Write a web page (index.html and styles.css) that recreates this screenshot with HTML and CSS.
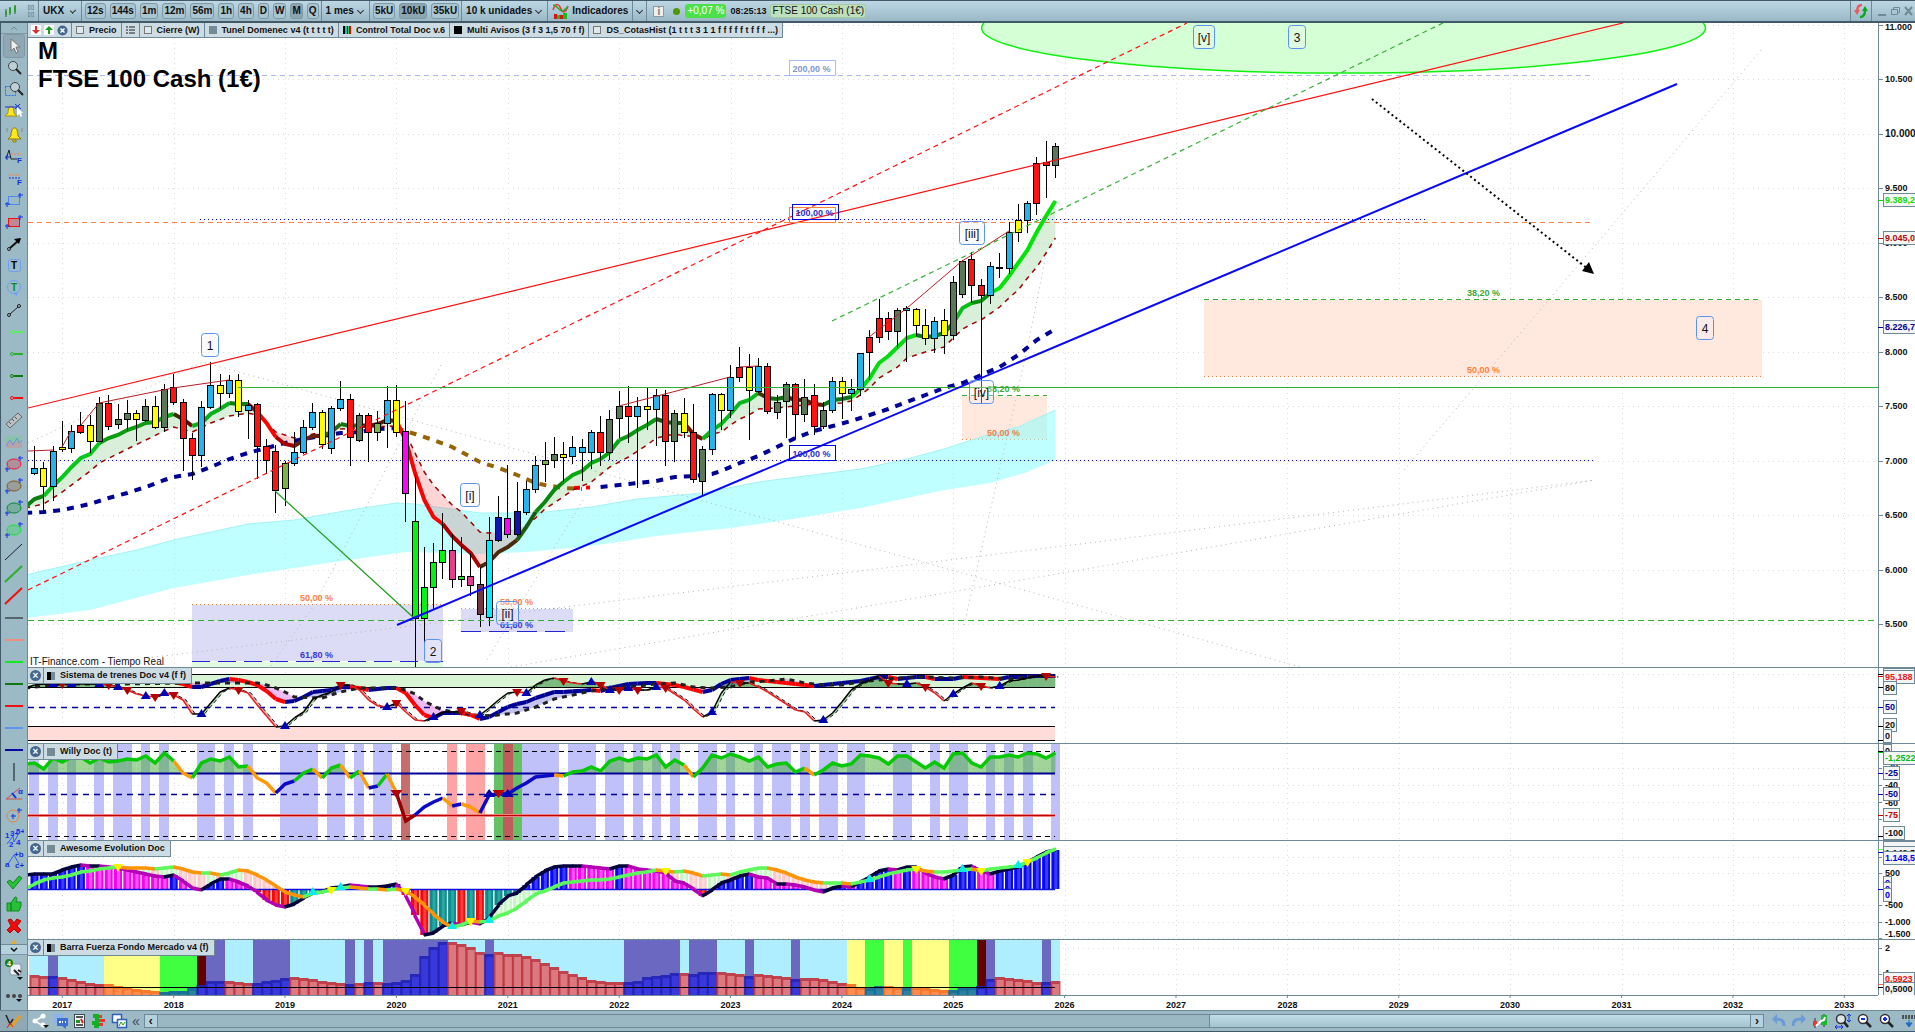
FILE: index.html
```html
<!DOCTYPE html>
<html lang="es">
<head>
<meta charset="utf-8">
<title>UKX - FTSE 100 Cash (1€)</title>
<link rel="stylesheet" href="styles.css">
</head>
<body>
<header class="topbar">
  <span class="cell logo"><svg width="14" height="16" viewBox="0 0 14 16"><path d="M2 6v8M6 4v8M11 2v9" stroke="#1c6b1c"/><path d="M1 8h2v4H1zM5 5h2v5H5zM10 3h2v6h-2z" fill="#2f9e2f"/></svg></span>
  <span class="cell links"><svg width="8" height="16" viewBox="0 0 8 16" fill="none" stroke="#7b939e"><rect x="1.500" y="1.500" width="2" height="5"/><rect x="5.500" y="1.500" width="2" height="5"/><rect x="1.500" y="9.500" width="2" height="5"/><rect x="5.500" y="9.500" width="2" height="5"/></svg></span>
  <button class="cell drop wide">UKX <i class="chev"></i></button>
  <div class="cell group">
    <button class="tf">12s</button><button class="tf">144s</button><button class="tf">1m</button><button class="tf">12m</button><button class="tf">56m</button><button class="tf">1h</button><button class="tf">4h</button><button class="tf">D</button><button class="tf">W</button><button class="tf on">M</button><button class="tf">Q</button>
  </div>
  <button class="cell drop">1 mes <i class="chev"></i></button>
  <div class="cell group">
    <button class="tf">5kU</button><button class="tf on">10kU</button><button class="tf">35kU</button>
  </div>
  <button class="cell drop">10 k unidades <i class="chev"></i></button>
  <button class="cell drop"><svg width="17" height="16" viewBox="0 0 17 16" fill="none"><path d="M1 7C4-1 7 1 9 6s5 3 7-3" stroke="#e33" stroke-width="1.500"/><path d="M1 2c4 0 6 6 9 6s4-4 6-4" stroke="#2fa82f" stroke-width="1.500"/><path d="M2 11h3v5H2zM8 12h3v4H8z" fill="#e01010"/><path d="M5 12h3v4H5zM11 10h4v6h-4z" fill="#10c020"/></svg>Indicadores</button>
  <button class="cell drop only" aria-label="Más indicadores"><i class="chev"></i></button>
  <div class="status">
    <span class="info">i</span><span class="dot"></span><span class="pct">+0,07 %</span><b class="clock">08:25:13</b><span class="name">FTSE 100 Cash (1€)</span>
  </div>
  <button class="sync" aria-label="Sincronizar"><svg width="16" height="16" viewBox="0 0 16 16" fill="none" stroke-width="2.500"><path d="M9 2C5 2 4 5 4 9" stroke="#ee5a5a"/><path d="M1 7l3 5 3-5z" fill="#ee5a5a"/><path d="M7 14c4 0 5-3 5-7" stroke="#10a820"/><path d="M9 8l3-5 3 5z" fill="#10a820"/></svg></button>
  <div class="win">
    <button aria-label="Minimizar"><svg width="9" height="12"><path d="M0 10h8" stroke="#6f8996" stroke-width="2"/></svg></button>
    <button aria-label="Restaurar"><svg width="9" height="12" fill="none" stroke="#6f8996"><path d="M2.500 4V2.500h6v5H6.500M.500 4.500h6v5h-6z"/></svg></button>
    <button aria-label="Cerrar"><svg width="9" height="12"><path d="M1 2l7 8M8 2l-7 8" stroke="#6f8996" stroke-width="2"/></svg></button>
  </div>
</header>

<div class="workspace">
  <aside class="tools">
    <button class="scroll up" aria-label="Subir"><svg width="8" height="5"><path d="M1 4l3-3 3 3" fill="none" stroke="#6f8996" stroke-width="1"/></svg></button>
    <div class="toollist" id="tools"></div>
    <button class="scroll down" aria-label="Bajar"><svg width="8" height="5"><path d="M1 1l3 3 3-3" fill="none" stroke="#111" stroke-width="1.500"/></svg></button>
    <div class="toolend">
      <button class="tool" aria-label="Ajustes"><svg width="20" height="22" viewBox="0 0 20 22"><rect x="6" y="6" width="11" height="11" rx="2" fill="#eef2f4" stroke="#8895a0"/><circle cx="5" cy="5" r="4" fill="#1a7f1a"/><text x="5" y="8" class="badge">4</text><path d="M10 12l5 5m-1-5l3 2" stroke="#222" stroke-width="2"/><path d="M13 19h6l-3 3z" fill="#111"/></svg></button>
      <button class="tool" aria-label="Más"><svg width="20" height="22" viewBox="0 0 20 22"><circle cx="4" cy="11" r="2" fill="#444"/><circle cx="10" cy="11" r="2" fill="#444"/><circle cx="16" cy="11" r="2" fill="#444"/><path d="M12 14h6l-3 3z" fill="#111"/></svg></button>
    </div>
  </aside>

  <main class="charts">
    <section class="panel price">
      <svg id="price"></svg>
      <div class="chips">
        <span class="chip icons">
          <svg width="10" height="10"><rect width="10" height="10" rx="1" fill="#fff"/><path d="M4 1h2v4h3L5 9 1 5h3z" fill="#d83030"/></svg>
          <svg width="10" height="10"><rect width="10" height="10" rx="1" fill="#fff"/><path d="M4 9h2V5h3L5 1 1 5h3z" fill="#1a9c1a"/></svg>
          <svg width="11" height="11" viewBox="0 0 11 11"><circle cx="5.500" cy="5.500" r="5" fill="#44688c"/><path d="M3.500 3.500l4 4m0-4l-4 4" stroke="#fff" stroke-width="1.500"/></svg>
        </span>
        <span class="chip"><i class="sq hollow"></i>Precio</span>
        <span class="chip list"><svg width="9" height="8"><path d="M0 1h2M0 4h2M0 7h2M3 1h6M3 4h6M3 7h6" stroke="#222"/></svg></span>
        <span class="chip"><i class="sq hollow"></i>Cierre (W)</span>
        <span class="chip"><i class="sq grey"></i>Tunel Domenec v4 (t t t t t)</span>
        <span class="chip"><i class="sq multi"></i>Control Total Doc v.6</span>
        <span class="chip"><i class="sq black"></i>Multi Avisos (3 f 3 1,5 70 f f)</span>
        <span class="chip"><i class="sq hollow"></i>DS_CotasHist (1 t t t 3 1 1 f f f f f t f f f ...)</span>
      </div>
      <h1 class="title">M<br>FTSE 100 Cash (1€)</h1>
      <p class="source">IT-Finance.com - Tiempo Real</p>
    </section>
    <section class="panel trains"><svg id="trains"></svg><h2 class="caption"><i class="x"></i><span><i class="sq half"></i>Sistema de trenes Doc v4 (f f)</span></h2></section>
    <section class="panel willy"><svg id="willy"></svg><h2 class="caption"><i class="x"></i><span><i class="sq grey"></i>Willy Doc (t)</span></h2></section>
    <section class="panel awesome"><svg id="awesome"></svg><h2 class="caption"><i class="x"></i><span><i class="sq grey"></i>Awesome Evolution Doc</span></h2></section>
    <section class="panel force"><svg id="force"></svg><h2 class="caption"><i class="x"></i><span><i class="sq half"></i>Barra Fuerza Fondo Mercado v4 (f)</span></h2></section>
    <section class="panel time"><svg id="time"></svg></section>
  </main>
</div>

<footer class="bottombar">
  <button class="bi first" aria-label="Dibujar"><svg width="18" height="18" viewBox="0 0 18 18" fill="none"><path d="M1 3l4 9 3-5" stroke="#222" stroke-width="1.500"/><path d="M6 15L15 4" stroke="#e8a020" stroke-width="3"/><path d="M2 16l3-5 3 4" stroke="#d22"/></svg></button>
  <button class="bi" aria-label="Compartir"><svg width="17" height="16" viewBox="0 0 17 16"><path d="M11 3L3 8l8 5" fill="none" stroke="#fff" stroke-width="1.500"/><circle cx="3" cy="8" r="2.500" fill="#fff"/><circle cx="11" cy="3" r="2.500" fill="#fff"/><circle cx="11" cy="12" r="2.500" fill="#fff"/><path d="M11 12h6l-3 3z" fill="#111"/></svg></button>
  <button class="bi" aria-label="Chat"><svg width="16" height="16" viewBox="0 0 16 16"><path d="M1 1h10v8H4l-3 3z" fill="#8fb2ea"/><path d="M4 5h11v8h-2v3l-4-3H4z" fill="#3a6fd0"/><path d="M6 9h2M9 9h1M12 9h1" stroke="#fff" stroke-width="2"/></svg></button>
  <button class="bi" aria-label="Informe"><svg width="14" height="16" viewBox="0 0 14 16"><rect x="1.500" y="1.500" width="10" height="13" fill="#f4f6f7" stroke="#3b4a52"/><path d="M3 4h7M3 12h7" stroke="#222" stroke-width="1.500"/><path d="M3 7h4v3H3z" fill="#1a9c1a"/><path d="M8 6l2 4" stroke="#d22" stroke-width="2"/></svg></button>
  <button class="bi" aria-label="Profundidad"><svg width="16" height="16" viewBox="0 0 16 16"><path d="M2 1h6v4H2zM4 5h4v3H4zM1 8h7v4H1zM3 12h5v3H3z" fill="#12b024"/><path d="M8 2h3v3H8zM8 6h6v3H8zM8 10h4v3H8z" fill="#e33"/></svg></button>
  <button class="bi" aria-label="Ventanas"><svg width="17" height="16" viewBox="0 0 17 16"><rect x="1.500" y="1.500" width="9" height="8" fill="#fff" stroke="#2c62b8" stroke-width="1.500"/><rect x="6.500" y="6.500" width="9" height="8" fill="#fff" stroke="#2c62b8" stroke-width="1.500"/><path d="M8 13l2-4 2 3 2-3" stroke="#1a9c1a" fill="none"/></svg></button>
  <button class="bi small" aria-label="Plegar">«</button>
  <div class="scrollbar">
    <button class="arrow" aria-label="Izquierda">‹</button>
    <div class="track"><div class="thumb"></div></div>
    <button class="arrow" aria-label="Derecha">›</button>
  </div>
  <div class="bottomright">
    <button class="bi" aria-label="Deshacer"><svg width="14" height="14" fill="none"><path d="M12 12c0-6-3-7-9-7" stroke="#6c9ad6" stroke-width="3"/><path d="M0 5l5-5v10z" fill="#6c9ad6"/></svg></button>
    <button class="bi" aria-label="Rehacer"><svg width="14" height="14" fill="none"><path d="M1 12c0-6 3-7 9-7" stroke="#6c9ad6" stroke-width="3"/><path d="M14 5L9 0v10z" fill="#6c9ad6"/></svg></button>
    <button class="bi" aria-label="Configurar velas"><svg width="16" height="16" viewBox="0 0 16 16"><path d="M3 5v10M12 1v13" stroke="#333"/><path d="M1 8h4v5H1z" fill="#e33"/><path d="M9 2h6v10H9z" fill="#1db92c"/><path d="M4 13l5-5 3-1 1-3" stroke="#fff" stroke-width="2" fill="none"/></svg></button>
    <button class="bi" aria-label="Ajustar zoom"><svg width="17" height="16" viewBox="0 0 17 16"><circle cx="7" cy="6" r="4.500" fill="#dde6ea" stroke="#333" stroke-width="1.500"/><path d="M10 9l4 5" stroke="#222" stroke-width="2.500"/><path d="M1 14h8M15 1v8M3 12l-2 2 2 2M7 12l2 2-2 2M13 3l2-2 2 2M13 7l2 2 2-2" stroke="#1030e0" fill="none"/></svg></button>
    <button class="bi" aria-label="Alejar"><svg width="16" height="16" viewBox="0 0 16 16"><circle cx="6" cy="6" r="4.500" fill="#fff" stroke="#333" stroke-width="1.500"/><path d="M9 9l5 5" stroke="#222" stroke-width="2.500"/><path d="M4 6h4" stroke="#1030e0" stroke-width="2"/></svg></button>
    <button class="bi" aria-label="Acercar"><svg width="16" height="16" viewBox="0 0 16 16"><circle cx="6" cy="6" r="4.500" fill="#fff" stroke="#333" stroke-width="1.500"/><path d="M9 9l5 5" stroke="#222" stroke-width="2.500"/><path d="M4 6h4M6 4v4" stroke="#1030e0" stroke-width="2"/></svg></button>
    <button class="bi" aria-label="Teclado"><svg width="14" height="16" viewBox="0 0 14 16"><path d="M1 3h13M1 5h13" stroke="#333" stroke-dasharray="2 1" stroke-width="1.500"/><path d="M8 7v5M5 10h6l-3 4z" stroke="#2468c8" fill="#2468c8"/></svg></button>
  </div>
</footer>
<script src="chart.js"></script>
</body>
</html>
```
FILE: styles.css
```css
* { box-sizing: border-box; }

body {
  margin: 0;
  height: 100vh;
  display: flex;
  flex-direction: column;
  overflow: hidden;
  background: #fff;
  color: #111;
  font: 10px/14px "Liberation Sans", Arial, sans-serif;
}

button {
  margin: 0;
  padding: 0;
  border: 0;
  background: none;
  color: inherit;
  font: inherit;
}

svg { display: block; }

/* top bar */
.topbar {
  flex: none;
  height: 23px;
  display: flex;
  align-items: stretch;
  background: linear-gradient(#bdd7e5, #9ab8c6);
  border-top: 1px solid #42596a;
  border-bottom: 2px solid #42596a;
  font-weight: bold;
}
.cell {
  display: flex;
  align-items: center;
  padding: 0 4px;
  border-right: 1px solid #6f8996;
  white-space: nowrap;
}
.logo { width: 23px; border: 0; }
.links { width: 16px; }
.wide { width: 43px; }
.group { gap: 4px; padding: 0 2px 0 3px; }
.drop { gap: 3px; }
.only { padding: 0 2px; }
.chev {
  width: 5px;
  height: 5px;
  margin: 0 2px 2px 1px;
  border: solid #333;
  border-width: 0 1px 1px 0;
  transform: rotate(45deg);
}
.wide .chev { margin-left: 4px; }
.only .chev { margin-left: 2px; }
.tf {
  height: 16px;
  padding: 0 1px;
  border: 1px solid #7f98a4;
  border-radius: 3px;
  background: #aac5d2;
}
.tf.on { background: #8ba5b1; }
.status {
  flex: 1;
  display: flex;
  align-items: center;
  gap: 4px;
  padding-left: 6px;
}
.info {
  width: 11px;
  height: 11px;
  border: 1px solid #8d9aa1;
  background: #eee;
  color: #777;
  line-height: 10px;
  text-align: center;
}
.dot {
  width: 7px;
  height: 7px;
  margin: 0 1px 0 5px;
  border-radius: 50%;
  background: #4c9a00;
}
.pct {
  padding: 0 2px;
  border-radius: 3px;
  background: #4de04d;
  color: #fff;
  font-weight: normal;
}
.clock { font-size: 9px; }
.name {
  padding: 0 1px;
  border: 1px solid #a5cba2;
  border-radius: 3px;
  background: #bfdfbd;
  font-weight: normal;
  line-height: 12px;
}
.sync {
  padding: 0 2px;
  border: solid #6f8996;
  border-width: 0 1px;
}
.win { display: flex; align-items: center; gap: 4px; padding: 0 2px 0 6px; }

/* work area */
.workspace {
  flex: 1;
  min-height: 0;
  display: grid;
  grid-template-columns: 28px 1fr;
}
.tools {
  min-height: 0;
  display: flex;
  flex-direction: column;
  background: #9cb9c6;
  border-left: 1px solid #42596a;
  border-right: 1px solid #6f8996;
}
.scroll { flex: none; height: 11px; display: grid; place-items: center; border-bottom: 1px solid #7f98a4; }
.scroll.down { border-top: 1px solid #6f8996; background: #b5d1de; }
.toollist { flex: 1; min-height: 0; overflow: hidden; padding-top: 1px; }
.tool { display: grid; place-items: center; width: 26px; height: 22px; }
.tool.on > svg { background: #8fa8b4; outline: 1px solid #7f98a4; border-radius: 2px; }
.toolend { flex: none; height: 55px; display: flex; flex-direction: column; justify-content: space-around; }
.badge { font: bold 7px "Liberation Sans", sans-serif; fill: #fff; text-anchor: middle; }
.tl { font: bold 10px "Liberation Sans", sans-serif; text-anchor: middle; }
.ts { font: bold 8px "Liberation Sans", sans-serif; fill: #1030e0; }

.charts { min-width: 0; min-height: 0; display: flex; flex-direction: column; }
.panel { position: relative; flex: none; min-height: 0; }
.panel > svg { width: 100%; height: 100%; }
.price { flex: 1; }
.trains { height: 76px; }
.willy { height: 97px; }
.awesome { height: 99px; }
.force { height: 56px; }
.time { height: 15px; }

.chips {
  position: absolute;
  top: 0;
  left: 0;
  display: flex;
  height: 15px;
  font-size: 9px;
  font-weight: bold;
  white-space: nowrap;
}
.chip {
  display: flex;
  align-items: center;
  gap: 5px;
  padding: 0 4px;
  background: #cddce3;
  border: solid #6f8996;
  border-width: 0 1px 1px 0;
}
.icons { width: 44px; gap: 3px; padding: 0 3px; }
.sq { flex: none; width: 8px; height: 8px; }
.hollow { border: 1px solid #777; background: #dfe8ec; }
.grey { background: #748a95; }
.black { background: #000; }
.multi { background: linear-gradient(90deg, #000 2px, #0cc 2px 4px, #000 4px 5px, #4c4 5px 6px, #d00 6px); }
.half { background: linear-gradient(90deg, #000 50%, #748a95 50%); }

.title {
  position: absolute;
  top: 14px;
  left: 10px;
  margin: 0;
  color: #000;
  font-size: 24px;
  line-height: 28px;
}
.source { position: absolute; left: 2px; bottom: 0; margin: 0; line-height: 10px; color: #111; }

.caption {
  position: absolute;
  top: 1px;
  left: 0;
  display: flex;
  height: 16px;
  margin: 0;
  background: #cddce3;
  border: solid #6f8996;
  border-width: 0 1px 1px 0;
  font-size: 9px;
  line-height: 15px;
  white-space: nowrap;
}
.caption > span { display: flex; align-items: center; gap: 5px; padding: 0 5px 0 3px; border-left: 1px solid #6f8996; }
.x {
  width: 11px;
  height: 11px;
  margin: 2px;
  border-radius: 50%;
  background: #44688c;
  color: #fff;
  font: bold 10px/11px "Liberation Sans", sans-serif;
  text-align: center;
}
.x::before { content: "×"; }

svg text { font-family: "Liberation Sans", Arial, sans-serif; }
.num { font-size: 9px; font-weight: bold; }
.big { font-size: 10px; font-weight: bold; }
.wave { font-size: 12px; text-anchor: middle; }
.mid { text-anchor: middle; }
.crisp { shape-rendering: crispEdges; }

/* bottom bar */
.bottombar {
  flex: none;
  height: 22px;
  display: flex;
  align-items: center;
  gap: 4px;
  background: #9cb9c6;
  border-top: 1px solid #6f8996;
  border-bottom: 1px solid #42596a;
}
.bi { flex: none; display: grid; place-items: center; height: 20px; }
.first { width: 28px; background: #8fa8b4; border-right: 1px solid #6f8996; }
.small { font-size: 14px; color: #3a4c55; }
.scrollbar { flex: 1; height: 14px; display: flex; border: 1px solid #6f8996; }
.arrow { width: 12px; background: #b5d1de; font: bold 12px/10px "Liberation Sans", sans-serif; }
.track { flex: 1; display: flex; justify-content: flex-end; background: #9ab7c4; border: solid #6f8996; border-width: 0 1px; }
.thumb { width: 34%; background: linear-gradient(#c0dde9, #a3c3d0); border-left: 1px solid #6f8996; }
.bottomright { display: flex; gap: 6px; padding-left: 4px; }
```
FILE: chart.js
```js
const LEFT = 28, WIDTH = 1887, AXIS = 1878, LAST = 1055;
const month = i => 62.3 + 9.281 * i;
const years = Array.from({ length: 17 }, (_, k) => [2017 + k, month(12 * k)]);

// Small drawing helper: keeps one coordinate space and fits it to the panel.
class Plot {
  constructor(id, top, height) {
    this.el = document.getElementById(id);
    const box = this.el.getBoundingClientRect();
    this.kx = box.width / WIDTH;
    this.ky = box.height / height;
    this.top = top;
    this.height = height;
    this.out = [];
  }
  X(x) { return +((x - LEFT) * this.kx).toFixed(1); }
  Y(y) { return +((y - this.top) * this.ky).toFixed(1); }
  add(s) { this.out.push(s); }
  line(x1, y1, x2, y2, c, w = 1, dash = '', extra = '') {
    this.add(`<line x1="${this.X(x1)}" y1="${this.Y(y1)}" x2="${this.X(x2)}" y2="${this.Y(y2)}" stroke="${c}" stroke-width="${w}" stroke-dasharray="${dash}" ${extra}/>`);
  }
  h(y, x1, x2, c, w = 1, dash = '') { this.line(x1, y + 0.5, x2, y + 0.5, c, w, dash); }
  rect(x1, y1, x2, y2, fill, extra = '') {
    this.add(`<rect x="${this.X(x1)}" y="${this.Y(y1)}" width="${(this.X(x2) - this.X(x1)).toFixed(1)}" height="${(this.Y(y2) - this.Y(y1)).toFixed(1)}" fill="${fill}" ${extra}/>`);
  }
  pts(list) { return list.map(([x, y]) => this.X(x) + ',' + this.Y(y)).join(' '); }
  poly(list, c, w, dash = '') { this.add(`<polyline points="${this.pts(list)}" fill="none" stroke="${c}" stroke-width="${w}" stroke-dasharray="${dash}"/>`); }
  area(list, fill) { this.add(`<polygon points="${this.pts(list)}" fill="${fill}"/>`); }
  text(x, y, s, c = '#111', cls = 'num') { this.add(`<text x="${this.X(x)}" y="${this.Y(y)}" fill="${c}" class="${cls}">${s}</text>`); }
  tri(i, y, up, c, r = 5) {
    const x = month(i), d = up ? -1 : 1;
    this.area([[x - r, y - d * 3], [x + r, y - d * 3], [x, y + d * 5]], c);
  }
  grid(rows) {
    rows.forEach(y => { this.h(y, LEFT, AXIS, '#dcdcdc', 1, '1 4'); this.h(y, AXIS, AXIS + 4, '#6f8996'); });
    years.forEach(([, x]) => this.line(Math.round(x) + 0.5, this.top, Math.round(x) + 0.5, this.top + this.height, '#dcdcdc', 1, '1 4'));
  }
  frame(sep = true) {
    if (sep) this.h(this.top, LEFT, LEFT + WIDTH, '#6f8996', 1);
    this.line(AXIS + 0.5, this.top, AXIS + 0.5, this.top + this.height, '#6f8996');
  }
  tag(y, s, c, w = 31) {
    this.rect(1883.5, y + 0.5, 1883.5 + w, y + 13.5, '#f4f5f5', 'stroke="#6f8996"');
    this.text(1885, y + 10, s, c);
  }
  done() { this.el.innerHTML = this.out.join(''); }
}

// Expands sparse [index, y] pairs into one value per month.
function expand(pairs) {
  const m = new Map();
  for (let k = 0; k < pairs.length - 1; k++) {
    const [a, ya] = pairs[k], [b, yb] = pairs[k + 1];
    for (let i = a; i <= b; i++) m.set(i, ya + (yb - ya) * (i - a) / (b - a));
  }
  return m;
}
const seq = (start, s) => s.trim().split(/\s+/).map((v, k) => [start + k, +v]);
const sparse = s => s.trim().split(/\s+/).map(p => p.split(':').map(Number));
const toXY = list => list.map(([i, y]) => [month(i), y]);

const candleColor = { b: '#25b4ee', y: '#ffff00', r: '#ff1414', g: '#587858', l: '#7cb546', m: '#ff00ff', G: '#00f510', p: '#e0408c', w: '#703840', c: '#00f0ff', n: '#1414b0', k: '#000' };
// high, open/close top, open/close bottom, low, colour - one group per month from October 2016
const candles = `446,468,473,474,b 462,468,486,512,y 446,451,486,500,b 421,447,449,451,y 425,431,448,452,b 412,425,432,433,r 415,425,441,452,y 397,403,441,441,g 395,403,426,429,r 404,419,424,428,g 400,413,419,430,g 410,413,419,440,y 399,406,420,421,g 396,406,427,428,y 384,389,427,431,g 374,387,402,404,r 399,402,438,470,r 433,438,455,479,r 401,407,455,466,b 362,385,407,408,b 374,385,393,408,y 375,380,393,397,b 374,380,411,416,y 400,405,410,438,b 403,404,446,478,r 439,446,460,472,r 445,451,490,512,r 461,463,488,505,l 432,452,463,465,b 420,427,452,453,b 403,412,427,429,b 410,412,444,448,y 406,408,448,453,b 381,399,408,410,b 394,399,437,465,r 413,415,440,441,g 413,415,432,461,r 411,423,432,440,l 386,400,423,447,b 385,400,432,436,y 401,431,493,521,m 474,521,618,667,G 547,587,618,642,G 543,562,587,608,G 513,550,562,578,G 534,550,579,587,p 537,576,579,586,G 553,576,585,595,p 567,584,614,626,w 517,540,617,625,c 496,517,540,541,n 465,518,534,537,m 482,511,534,535,n 481,489,512,514,b 456,465,489,492,b 442,460,464,481,l 437,454,460,467,g 442,454,457,481,y 436,447,456,463,b 439,447,452,480,b 430,432,452,468,b 416,432,452,465,r 410,419,452,459,g 391,406,418,437,g 386,406,416,442,r 397,406,416,487,b 387,406,409,429,y 389,395,409,445,b 390,395,441,465,r 410,413,441,461,g 398,413,432,437,y 404,432,479,482,r 446,449,481,494,g 393,394,449,454,b 393,394,410,429,y 365,377,410,417,b 347,367,377,381,r 354,367,390,439,y 358,366,391,392,b 363,366,411,413,r 395,402,412,418,g 382,384,401,437,g 383,384,414,438,r 379,397,414,421,g 384,395,426,434,r 402,410,426,428,g 377,381,410,412,b 377,381,393,418,y 379,389,393,410,b 353,353,389,395,b 330,337,352,379,r 299,318,337,342,r 312,318,331,339,r 308,310,331,347,g 306,308,310,361,b 308,309,325,335,y 309,325,338,344,y 317,321,338,352,b 309,320,335,353,y 276,282,335,339,g 260,261,294,297,g 252,259,285,302,r 279,285,295,403,r 262,266,295,303,b 253,267,268,277,k 222,232,268,273,b 204,220,232,241,y 201,203,220,232,b 157,163,203,214,r 141,162,165,197,r 143,146,165,177,g`
  .split(' ').map(s => s.split(','));

const average = seq(-4, `507 499 496 486 477 467 458 454 443 438 435 430 427 423 422 417 414 419 426 423 414 409 403 404 404 412 423 437 444 446 440 436 436 432 424 426 425 426 424 420 421 440 473 500 517 524 536 545 553 567 562 552 547 540 527 512 502 490 482 475 471 463 459 452 440 436 430 425 419 422 423 423 434 439 430 424 414 403 400 393 398 399 397 400 400 404 405 400 399 397 389 378 363 356 347 338 335 337 336 333 323 308 303 301 293 288 276 263 250 232 216 201`);
const averageColors = [[-2, '#0a8010'], [4, '#06c81a'], [11, '#0a9c12'], [12, '#0aa812'], [13, '#3c2c00'], [14, '#7a0000'], [18, '#06b01a'], [20, '#0b7a12'], [21, '#a80000'], [23, '#ff0000'], [25, '#a80000'], [28, '#6a2010'], [30, '#2a6a10'], [32, '#0b7a12'], [35, '#601c00'], [36, '#4a2800'], [41, '#ff0000'], [45, '#a80000'], [49, '#4a2a0c'], [51, '#1c5a10'], [54, '#0a8810'], [60, '#06a812'], [64, '#0a9812'], [67, '#1c5a10'], [69, '#7a1000'], [75, '#06b81a'], [76, '#4a3400'], [78, '#107010'], [82, '#601c08'], [85, '#0a7818'], [92, '#04dc10'], [96, '#0a7c10'], [98, '#06c018'], [100, '#0a9010'], [108, '#02e408']];
const signal = sparse(`-4:508 -2:504 0:492 3:471 4:463 7:449 9:440 11:431 12:427 14:432 16:423 18:416 20:413 21:415 22:423 23:432 25:438 26:437 27:434 30:429 33:427 36:426 37:433 38:453 39:472 40:485 42:505 43:512 44:522 45:532 46:533 48:531 49:529 50:525 51:518 52:509 53:503 55:490 57:482 59:467 61:457 63:445 64:438 66:434 67:436 68:436 69:440 70:434 71:432 72:425 73:419 74:415 75:409 77:408 79:406 81:404 82:404 84:403 85:401 86:395 87:388 88:378 90:367 91:358 93:352 95:347 96:338 97:329 98:324 99:320 101:307 102:298 103:290 104:278 105:267 106:253 107:238`);
const bandTop = sparse(`-4:575 4:558 8:550 12:540 16:532 20:524 25:520 31:510 36:503 38:504 45:513 50:513 52:512 57:507 62:499 69:493 75:482 80:476 86:469 91:459 95:449 99:437 103:427 107:410`);
const bandBottom = sparse(`-4:618 3:610 12:588 20:575 25:568 30:561 37:552 45:554 50:552 55:548 60:542 64:536 72:528 78:520 86:508 95:490 100:483 104:472 107:460`);
const slowA = sparse(`-4:513 -2:512 0:510 2:506 3:504 5:498 7:493 9:487 11:480 12:477 14:474 16:467 18:459 20:453 22:448 24:443 26:439 28:436 30:433 32:432 34:429 36:428`);
const slowB = sparse(`36:428 38:434 40:440 42:447 44:457 45:462 47:468 49:475 50:479 51:483 52:485 54:488 56:489`);
const slowC = sparse(`58:487 60:485 62:483 64:481 66:477 68:476 70:474 71:471 73:463 75:456 77:447 79:438 81:431 83:426 85:421 87:415 89:409 91:402 93:395 95:388 97:383 99:375 101:367 103:355 105:340 107:329`);

function drawPrice() {
  const p = new Plot('price', 23, 644);
  p.grid([25, 79, 134, 188, 243, 297, 352, 406, 461, 515, 570, 624]);

  p.rect(192, 605, 443, 661, '#dcdcf6');
  p.rect(192, 662, 443, 667, '#e2fbe2');
  p.h(604, 192, 443, '#ff8040', 1, '1 3');
  p.h(661, 192, 443, '#2424d0', 1, '18 8');
  p.rect(461, 609, 573, 632, '#dcdcf6');
  p.h(608, 461, 573, '#ff8040', 1, '1 3');
  p.h(631, 461, 573, '#2424d0', 1, '20 8');
  p.rect(962, 396, 1047, 439, '#ffe9df');
  p.h(395, 962, 1047, '#2fae2f', 1, '5 4');
  p.h(439, 962, 1047, '#ff8040', 1, '1 3');
  p.rect(1204, 300, 1762, 376, '#ffe9df');
  p.h(299, 1204, 1762, '#2fae2f', 1, '5 4');
  p.h(376, 1204, 1762, '#ff8040', 1, '1 3');

  p.area([...toXY(bandTop), ...toXY(bandBottom).reverse()], 'rgba(128,255,255,.5)');
  p.poly(toXY(bandTop), '#a4f2f4', 1);

  [[[28, 443], [203, 362], [1300, 667]], [[441, 365], [313, 607], [270, 667]], [[583, 500], [487, 660]], [[147, 658], [443, 622], [1080, 544], [1595, 480]],
   [[511, 667], [1080, 570], [1595, 480]], [[964, 625], [1027, 350], [1047, 250]], [[1404, 470], [1762, 49]]]
    .forEach(l => p.poly(l, '#b4b4b4', 1, '1 4'));

  p.add(`<ellipse cx="${p.X(1343.5)}" cy="${p.Y(28)}" rx="${362 * p.kx}" ry="${45 * p.ky}" fill="#d5ffd5" stroke="#10f010" stroke-width="1.500"/>`);

  p.h(75, 28, 1594, '#aab8f4', 1, '5 4');
  p.h(222, 28, 1594, '#ff8040', 1, '5 4');
  p.h(219, 200, 1427, '#0000e0', 1, '1 3');
  p.h(460, 28, 1594, '#0000e0', 1, '1 3');

  const ma = expand(average), sg = expand(signal);
  for (let i = -4; i < 107; i++) {
    const up = ma.get(i) + ma.get(i + 1) < sg.get(i) + sg.get(i + 1);
    p.area([[month(i), ma.get(i)], [month(i + 1), ma.get(i + 1)], [month(i + 1), sg.get(i + 1)], [month(i), sg.get(i)]], up ? 'rgba(0,150,0,.15)' : 'rgba(255,0,0,.17)');
  }
  p.poly(toXY(slowA), '#000096', 4, '7 7');
  p.poly(toXY(slowB), '#966400', 4, '7 7');
  p.line(574, 488, 590, 487.5, '#ff0000', 4, '6 6');
  p.poly(toXY(slowC), '#000096', 4, '7 7');
  p.poly(toXY(signal), '#a00000', 1.5, '5 5');

  let from = -4;
  averageColors.forEach(([to, c]) => {
    p.poly(toXY(average.filter(([i]) => i >= from && i <= to)), c, 4);
    from = to;
  });

  candles.forEach(([hi, a, b, lo, c], k) => {
    const x = Math.round(month(k - 3) - 0.4);
    p.line(x + 0.5, +hi, x + 0.5, +lo + 1, '#000');
    p.rect(x - 3, +a - 0.5, x + 4, Math.max(+b + 0.5, +a + 1), '#000', 'class="crisp"');
    if (b - a > 1) p.rect(x - 2, +a + 0.5, x + 3, +b - 0.5, candleColor[c], 'class="crisp"');
  });

  [[[28, 451], [53, 450]], [[62, 447], [71, 431]], [[81, 425], [99, 403], [173, 388], [229, 380]], [[619, 406], [730, 377]], [[739, 367], [758, 366]],
   [[869, 337], [907, 308], [962, 261], [972, 255], [1009, 231]]].forEach(l => p.poly(l, '#b81e24', 1));
  p.line(28, 408, 1623, 23, '#ff1010', 1.2);
  p.line(28, 590, 1187, 23, '#ff1010', 1.2, '5 4');
  p.line(832, 321, 1443, 23, '#38b038', 1.2, '5 4');
  p.h(387, 238, AXIS, '#2fae2f');
  p.h(620, 28, AXIS, '#2fae2f', 1, '6 4');
  p.line(275, 491, 414, 618, '#1c9c1c', 1.2);
  p.line(397, 625, 1677, 84, '#0808ff', 2);
  p.line(1372, 99, 1588, 269, '#000', 2, '2 3');
  p.area([[1594, 274], [1582, 271], [1589, 262]], '#000');

  const fib = (x, y, s, c) => p.text(x, y, s, c);
  fib(300, 601, '50,00 %', '#ff8040');
  fib(300, 658, '61,80 %', '#3838d8');
  fib(500, 605, '50,00 %', '#ff8040');
  fib(500, 628, '61,80 %', '#3838d8');
  fib(987, 392, '38,20 %', '#38a838');
  fib(987, 436, '50,00 %', '#f08050');
  fib(1467, 296, '38,20 %', '#38a838');
  fib(1467, 373, '50,00 %', '#ff8040');
  const frame = (x, y, s, c, t = c) => { p.rect(x, y, x + 46, y + 15, 'none', `stroke="${c}"`); if (s) p.text(x + 3, y + 11, s, t); };
  frame(789.5, 60.5, '200,00 %', '#aabcf8', '#8098c8');
  frame(789.5, 207.5, '', '#ff8040');
  frame(792.5, 204.5, '100,00 %', '#0000e0', '#3030c8');
  frame(789.5, 445.5, '100,00 %', '#0000e0', '#3030c8');

  [[201.5, 333.5, 17, '1'], [424.5, 639.5, 17, '2'], [460.5, 483.5, 19, '[i]'], [496.5, 601.5, 22, '[ii]'], [959.5, 221.5, 25, '[iii]'], [969.5, 380.5, 24, '[iv]'],
   [1193.5, 25.5, 21, '[v]'], [1288.5, 25.5, 17, '3'], [1696.5, 316.5, 17, '4']].forEach(([x, y, w, s]) => {
    p.rect(x, y, x + w, y + 23, 'rgba(240,240,250,.35)', 'rx="3" stroke="#5a94f0"');
    p.text(x + w / 2, y + 16, s, '#111', 'wave');
  });

  p.frame(false);
  p.rect(AXIS + 1, 23, 1915, 667, '#fff');
  [[25, '11.000'], [79, '10.500'], [134, '10.000'], [188, '9.500'], [243, '9.000'], [297, '8.500'], [352, '8.000'], [406, '7.500'], [461, '7.000'], [515, '6.500'], [570, '6.000'], [624, '5.500']]
    .forEach(([y, s]) => { p.h(y, AXIS, AXIS + 5, '#6f8996'); p.text(1885, y === 25 ? 30 : y + 3, s, '#111', s === '10.000' ? 'big' : 'num'); });
  [[193, 200, '9.389,2', '#10d810'], [231, 238, '9.045,0', '#b00c0c'], [320, 327, '8.226,7', '#000090']].forEach(([y, t, s, c]) => {
    p.h(t, AXIS, AXIS + 5, c, 1); p.tag(y, s, c, 40);
  });
  p.done();
}

const trainsFast = seq(-4, `688 685 684 684 684 684 684 684 684 685 687 690 694 696 697 693 695 700 714 714 703 692 688 690 693 705 716 727 726 718 712 699 695 692 685 685 690 700 706 707 703 712 720 721 717 712 712 711 714 715 708 700 693 692 693 685 680 678 681 683 684 682 685 690 690 688 690 690 687 688 694 700 709 717 712 693 682 683 683 687 692 698 704 710 712 721 720 713 702 690 684 680 676 683 684 684 683 687 693 701 694 688 683 686 688 686 681 680 678 676 676 677`);
const trainsSlow = sparse(`12:682 13:684 14:687 15:687 16:684 17:681 18:679 19:680 20:682 21:685 22:691 23:699 24:702 25:701 26:697 27:692 28:691 29:690 30:687 31:687 32:688 33:690 34:689 35:688 36:688 37:693 38:705 39:715 40:718 41:713 42:713 43:713 44:715 45:719 46:717 47:712 48:707 49:704 50:702 51:698 52:695 53:692 54:692 57:690 58:691 59:688 60:686 61:684 63:683 64:683 66:685 67:687 69:692 70:690 71:684 72:680 73:679 74:678 75:680 77:682 79:684 80:685 81:686 84:683 86:681 88:677 89:677 90:679 92:677 93:677 94:679 96:679 97:677 99:678 101:679 102:677 103:677 105:676 106:676 107:676`);
const trainsLag = sparse(`-4:688 0:684 6:684 14:683 21:683 22:685 23:688 24:692 25:697 28:698 30:692 32:688 36:688 37:690 38:694 39:701 40:706 41:710 43:713 45:716 47:715 49:713 51:707 53:699 55:695 57:691 60:687 62:686 64:684 66:683 68:687 70:688 72:687 74:682 76:681 78:679 80:683 82:685 84:685 86:682 88:680 90:678 93:677 96:678 99:677 102:679 105:676 107:676`);

function drawTrains() {
  const p = new Plot('trains', 667, 76);
  p.grid([674, 707]);
  p.rect(28, 675, LAST, 687, '#d9f3d5');
  p.rect(28, 727, LAST, 740, '#ffdcd8');
  const fast = expand(trainsFast), slow = expand(trainsSlow), lag = expand(trainsLag);
  const cut = v => Math.min(v, 687);
  for (let i = -4; i < 107; i++) p.area([[month(i), cut(fast.get(i))], [month(i + 1), cut(fast.get(i + 1))], [month(i + 1), 687], [month(i), 687]], 'rgba(30,130,40,.5)');
  for (let i = 12; i < 107; i++) {
    const above = slow.get(i) + slow.get(i + 1) < lag.get(i) + lag.get(i + 1);
    p.area([[month(i), slow.get(i)], [month(i + 1), slow.get(i + 1)], [month(i + 1), lag.get(i + 1)], [month(i), lag.get(i)]], above ? 'rgba(60,60,200,.3)' : 'rgba(210,60,220,.35)');
  }
  for (let i = -3; i < 107; i++) {
    const down = fast.get(i + 1) > fast.get(i);
    p.area([[month(i), fast.get(i)], [month(i + 1), fast.get(i + 1)], [month(i + 1) + 3, fast.get(i + 1)], [month(i) + 3, fast.get(i)]], down ? 'rgba(230,60,60,.4)' : 'rgba(60,180,60,.4)');
  }
  [674, 687, 726, 740].forEach(y => p.h(y, 28, LAST, '#000'));
  p.h(707, 28, LAST, '#0000a0', 1.5, '6 5');
  for (let i = 12; i < 107; i++) p.poly([[month(i), slow.get(i)], [month(i + 1), slow.get(i + 1)]], slow.get(i + 1) > slow.get(i) ? '#ff0000' : '#000096', 4);
  p.poly(toXY(trainsLag), '#202020', 3, '5 5');
  p.poly(trainsFast.map(([i, y]) => [month(i) + 3, y]), '#111', 1, '4 3');
  for (let i = -4; i < 107; i++) p.poly([[month(i), fast.get(i)], [month(i + 1), fast.get(i + 1)]], fast.get(i + 1) > fast.get(i) ? '#e02020' : '#000', 1.5);
  [-1, 1, 4, 6, 9, 11, 15, 24, 35, 40, 45, 50, 57, 59, 61, 64, 70, 82, 91, 96, 101].forEach(i => p.tri(i, fast.get(i), true, '#0000b4'));
  [0, 5, 7, 10, 12, 19, 30, 36, 43, 49, 54, 58, 60, 62, 65, 73, 89, 93, 99, 106].forEach(i => p.tri(i, fast.get(i), false, '#b40000'));
  p.frame();
  [[674, '#000'], [676, '#d00'], [687, '#000'], [707, '#0000a0'], [726, '#000'], [740, '#000']].forEach(([y, c]) => p.h(y, AXIS, AXIS + 5, c));
  p.tag(668, '', '#111');
  p.tag(670, '95,188', '#e02020');
  p.tag(681, '80', '#111', 13); p.tag(700, '50', '#0000a0', 13); p.tag(718, '20', '#111', 13); p.tag(729, '0', '#111', 8);
  p.done();
}

const willy = seq(-4, `764 763 769 758 762 757 757 763 758 762 761 759 760 756 763 753 761 773 778 763 759 761 757 767 766 778 783 793 784 781 773 769 778 768 765 778 771 788 786 774 793 821 815 807 802 798 806 804 807 813 795 794 794 788 783 777 776 775 776 772 771 767 771 761 758 761 758 759 755 767 760 765 777 768 755 758 754 757 761 757 767 764 763 772 768 775 770 763 766 764 755 756 758 764 756 756 762 768 762 768 754 753 763 767 757 757 755 757 753 754 758 753`);
const willyColors = [[12, '#06c806'], [14, '#ff9a08'], [20, '#06c806'], [23, '#ff9a08'], [25, '#0a0ac8'], [27, '#06c806'], [28, '#ff9a08'], [30, '#06c806'], [31, '#ff9a08'], [32, '#06c806'], [33, '#ff9a08'], [34, '#0a0ac8'], [35, '#06c806'], [36, '#ff9a08'], [38, '#960000'], [41, '#0a0ac8'], [42, '#ff9a08'], [43, '#0a0ac8'], [45, '#ff9a08'], [53, '#0a0ac8'], [54, '#ff9a08'], [67, '#06c806'], [68, '#ff9a08'], [80, '#06c806'], [81, '#ff9a08'], [107, '#06c806']];
const willyBands = '29-39 48-58 67-76 94-104 113-132 141-150 159-169 197-215 224-234 243-253 280-318 327-345 354-364 373-392 522-559 568-596 605-624 633-643 652-661 670-680 698-717 726-735 754-763 772-791 800-810 819-838 847-865 893-912 930-940 949-968 986-995 1004-1014 1023-1033 1051-1060';

function drawWilly() {
  const p = new Plot('willy', 743, 97);
  p.grid([768, 785, 802, 819]);
  willyBands.split(' ').forEach(s => { const [a, b] = s.split('-'); p.rect(+a, 743, +b, 840, '#c1c1fa'); });
  [[401, 410, '#c46e6e'], [447, 457, '#ffa4a4'], [466, 485, '#ffa4a4'], [494, 503, '#64c264'], [503, 513, '#c05c5c'], [513, 522, '#64c264']].forEach(([a, b, c]) => p.rect(a, 743, b, 840, c));
  const v = expand(willy), cut = y => Math.min(y, 773);
  for (let i = -4; i < 107; i++) p.area([[month(i), cut(v.get(i))], [month(i + 1), cut(v.get(i + 1))], [month(i + 1), 773], [month(i), 773]], 'rgba(65,170,50,.5)');
  p.h(751, 28, LAST, '#000', 1, '5 4');
  p.h(836, 28, LAST, '#000', 1, '5 4');
  p.h(773, 28, LAST, '#000096', 2);
  p.h(794, 28, LAST, '#000096', 1.5, '6 5');
  p.h(815, 28, LAST, '#f08080', 3);
  p.h(815, 28, LAST, '#c00000', 1);
  let from = -4;
  willyColors.forEach(([to, c]) => { p.poly(toXY(willy.filter(([i]) => i >= from && i <= to)), c, 3.5); from = to; });
  p.tri(36, 793, false, '#b40000', 6); p.tri(46, 794, true, '#0000b4', 6); p.tri(47, 793, false, '#b40000', 6); p.tri(48, 794, true, '#0000b4', 6);
  p.frame();
  [[751, '#000'], [752, '#00c010'], [773, '#0000a0'], [794, '#0000a0'], [815, '#c00000'], [836, '#000']].forEach(([y, c]) => p.h(y, AXIS, AXIS + 5, c));
  p.tag(744, '0', '#111', 8);
  p.text(1885, 769, '-20');
  p.text(1885, 788, '-40');
  p.text(1885, 806, '-60');
  p.tag(751, '-1,2522', '#06b81a', 40);
  p.tag(766, '-25', '#000090', 16); p.tag(787, '-50', '#000090', 16); p.tag(808, '-75', '#c00000', 16); p.tag(826, '-100', '#111', 21);
  p.done();
}

const aoFast = seq(-4, `875 874 874 874 870 867 865 866 866 867 868 870 872 874 876 877 875 881 888 890 884 879 879 882 886 892 900 905 907 904 898 893 892 888 887 885 886 887 887 886 884 895 915 935 933 926 923 925 922 924 918 905 896 893 885 877 871 867 866 866 866 867 868 869 866 866 869 870 871 873 881 883 889 896 890 883 880 876 874 877 878 884 884 885 887 890 892 888 886 887 882 877 871 869 870 867 867 873 877 879 875 867 866 871 874 871 869 867 862 857 852 850`);
const aoSlow = seq(-4, `889 884 880 878 877 875 872 871 869 868 867 868 868 868 869 868 867 869 872 873 873 875 873 870 871 875 880 886 892 895 897 893 892 890 888 887 888 889 889 890 889 891 897 905 914 922 927 925 921 922 921 916 913 908 901 894 891 887 883 882 881 880 880 879 877 875 873 872 870 871 872 871 873 876 875 874 875 872 870 868 868 870 873 877 880 882 883 883 883 884 882 880 877 874 872 870 869 871 872 872 871 870 869 871 869 868 867 866 862 858 853 849`);

function drawAwesome() {
  const p = new Plot('awesome', 840, 99), zero = 889;
  p.grid([857, 873, 905, 922, 938]);
  const f = expand(aoFast), s = expand(aoSlow);
  for (let i = -3; i <= 107; i++) {
    const y = f.get(i), rising = y < f.get(i - 1) || (y === f.get(i - 1) && i < 0), x = month(i), sy = s.get(i), fall = sy > s.get(i - 1);
    const c = y < zero ? (rising ? ['#0808f0', '#3c3cff'] : ['#f008e8', '#ff50ff']) : (rising ? ['#0c8c8c', '#2aa8a4'] : ['#f40808', '#ff4040']);
    const bar = (a, b, c1, c2) => { if (b - a > 1) { p.rect(x - 4, a, x + 4, b, c1); p.rect(x - 1, a, x + 2, b, c2); } };
    if (sy < y) bar(sy, Math.min(y, zero), fall ? '#ffc8c8' : '#c8f4c8', fall ? '#ffdcdc' : '#dcffdc');
    if (sy > zero && sy > y) bar(Math.max(y, zero), sy, '#c8f4c8', '#dcffdc');
    bar(Math.min(y, zero), Math.max(y, zero), c[0], c[1]);
  }
  p.h(zero, 28, LAST, '#1010e0', 1.5);
  for (let i = -4; i < 107; i++) p.poly([[month(i) - 0.5, f.get(i)], [month(i + 1) + 0.5, f.get(i + 1)]], f.get(i + 1) > f.get(i) ? '#b400b4' : '#04043c', 3.5);
  for (let i = -4; i < 107; i++) p.poly([[month(i) - 0.5, s.get(i)], [month(i + 1) + 0.5, s.get(i + 1)]], s.get(i + 1) > s.get(i) || (s.get(i + 1) === s.get(i) && i > 5 && i < 10) ? '#ff9408' : '#5cf85c', 3.5);
  [6, 29, 37, 44, 65, 92, 99, 104].forEach(i => p.tri(i, s.get(i), false, '#f8f400'));
  [27, 30, 42, 46, 87, 97, 103].forEach(i => p.tri(i, s.get(i) - 1, true, '#08ecec'));
  p.frame();
  [[849, '#5cf85c'], [852, '#0000e0'], [889, '#0000e0']].forEach(([y, c]) => p.h(y, AXIS, AXIS + 5, c));
  p.tag(841, '', '#111', 40); p.tag(846, '1.149,5', '#111', 40); p.tag(851, '1.148,5', '#0000f0', 40);
  p.text(1885, 876, '500');
  p.text(1885, 908, '-500'); p.text(1885, 925, '-1.000'); p.text(1885, 937, '-1.500');
  p.tag(876, '0', '#0000f0', 8); p.tag(882, '0', '#0000f0', 8); p.tag(888, '0', '#0000f0', 8);
  p.done();
}

const force = seq(-3, `975 976 976 977 979 981 983 984 984 986 987 989 990 991 992 991 991 988 985 981 981 981 982 983 983 981 980 978 977 978 979 981 982 983 984 983 982 982 983 982 980 974 956 947 942 942 944 947 952 954 952 954 954 956 959 963 967 971 974 977 980 981 982 982 982 981 977 976 975 973 973 974 972 972 972 973 974 976 974 975 976 977 979 978 978 979 981 983 984 987 988 986 986 987 988 987 988 989 990 990 988 987 986 979 977 978 979 980 982 982 981 982`);
const forceBands = [[48, 58, 'p'], [104, 160, 'y'], [160, 197, 'g'], [197, 206, 'm'], [206, 225, 'p'], [253, 290, 'p'], [345, 355, 'p'], [364, 373, 'p'], [383, 448, 'p'], [485, 494, 'p'], [624, 680, 'p'], [689, 717, 'p'], [745, 754, 'p'], [791, 800, 'p'], [847, 865, 'y'], [865, 884, 'g'], [884, 903, 'y'], [903, 912, 'g'], [912, 949, 'y'], [949, 977, 'g'], [977, 986, 'm'], [986, 995, 'p'], [1042, 1051, 'p']];

function drawForce() {
  const p = new Plot('force', 939, 56);
  p.grid([948, 974]);
  p.rect(29, 940, 1060, 995, '#afeeff');
  const fill = { p: '#6a68c0', y: '#ffff88', g: '#40ff40', m: '#640000' };
  forceBands.forEach(([a, b, k]) => p.rect(a, 940, b, 995, fill[k], 'class="crisp"'));
  force.slice(0, 111).forEach(([i, y]) => {
    const x = month(i), band = forceBands.find(([a, b]) => x > a && x < b), k = band && band[2];
    const edge = !k ? '#c03038' : k === 'y' ? '#f86a20' : k === 'g' ? '#1464a0' : '#2020b8';
    const body = !k ? '#dc7880' : k === 'y' ? '#ff8c50' : k === 'g' ? '#2c80a0' : '#3838dc';
    p.rect(x - 5, y, x + 5, 995, edge, 'fill-opacity=".9"');
    p.rect(x - 3, y + 3, x + 4, 995, body);
  });
  p.h(987, 28, LAST, '#000');
  p.frame();
  p.h(984, AXIS, AXIS + 5, '#f06060'); p.h(987, AXIS, AXIS + 5, '#000');
  p.text(1885, 951, '2'); p.text(1885, 976, '1');
  p.tag(972, '0,5923', '#f01010'); p.tag(982, '0,5000', '#111');
  p.done();
}

function drawTime() {
  const p = new Plot('time', 995, 15);
  p.h(995, LEFT, AXIS, '#6f8996');
  years.forEach(([y, x]) => { p.line(x, 995, x, 998, '#6f8996'); p.text(x, 1008, y, '#111', 'num mid'); });
  p.done();
}

const plus = (x, y) => `<path d="M${x - 2} ${y}h5M${x} ${y - 2}v5" stroke="#1030e0"/>`;
const handle = c => `<circle cx="8" cy="11" r="1.500" fill="none" stroke="${c}"/><path d="M10 11h9" stroke="${c}" stroke-width="2"/>`;
const slash = (c, w) => `<path d="M1 19L18 3" stroke="${c}" stroke-width="${w}"/>`;
const bar = (c, w = 2) => `<path d="M1 11h18" stroke="${c}" stroke-width="${w}"/>`;
const oval = c => `<ellipse cx="10" cy="11" rx="7" ry="5" fill="${c}" fill-opacity=".25" stroke="${c}"/>${plus(3, 16)}${plus(16, 5)}`;
const toolIcons = [
  ['Cursor', '<path d="M7 4v12l3-3 2 5 2-1-2-5h4z" fill="#eee" stroke="#777"/>'],
  ['Lupa', '<circle cx="9" cy="9" r="4.500" fill="#bcd0d8" stroke="#444"/><path d="M12 12l5 5" stroke="#222" stroke-width="2"/>'],
  ['Lupa de zona', '<rect x="1.500" y="7.500" width="10" height="9" fill="none" stroke="#2c6fe0" stroke-dasharray="2 1"/><circle cx="11" cy="8" r="4.500" fill="#bcd0d8" stroke="#444"/><path d="M14 11l5 5" stroke="#222" stroke-width="2"/>'],
  ['Alerta', '<path d="M1 15l3-3c0-9 6-9 6 0l3 3z" fill="#ffe81a" stroke="#a8900a"/><path d="M1 6h12M11 3l6 5M16 3l-5 5" stroke="#1030e0"/><path d="M13 6v9l2-2 2 3 1-1-1-3h2z" fill="#fff"/>'],
  ['Alarma', '<path d="M4 16l3-3c0-11 7-11 7 0l3 3zM9 17h3v2H9z" fill="#ffe81a" stroke="#8f7a08"/><path d="M3 5v4M18 5v4" stroke="#888"/>'],
  ['Fibonacci', '<path d="M2 14l3-9 2 9h6" fill="none" stroke="#222"/><path d="M7 9h10" stroke="#ff8040" stroke-dasharray="2 1"/><text x="13" y="18" class="ts">F</text>' + plus(3, 12)],
  ['Extensión', '<path d="M5 8h12" stroke="#ff8040" stroke-dasharray="2 1"/><path d="M5 11h12" stroke="#1030e0" stroke-dasharray="2 1"/><text x="13" y="18" class="ts">F</text>'],
  ['Rectángulo', '<rect x="4.500" y="7.500" width="11" height="8" fill="none" stroke="#4a88f0"/>' + plus(3, 15) + plus(16, 6)],
  ['Rectángulo rojo', '<rect x="4.500" y="7.500" width="11" height="8" fill="#c08894" stroke="#f01010"/>' + plus(3, 15) + plus(16, 6)],
  ['Flecha', '<circle cx="5" cy="16" r="1.500" fill="none" stroke="#222"/><path d="M6 15l8-7" stroke="#111" stroke-width="2"/><path d="M10 6l7-1-2 6z"/>'],
  ['Texto', '<rect x="4.500" y="4.500" width="12" height="12" rx="2" fill="none" stroke="#6aa0f4"/><text x="10" y="14" class="tl">T</text>'],
  ['Globo', '<circle cx="10" cy="10" r="6.500" fill="none" stroke="#6aa0f4"/><path d="M9 16l4 3v-4" fill="#6aa0f4"/><text x="10" y="14" class="tl" fill="#0a8a20">T</text>'],
  ['Segmento', '<circle cx="5" cy="16" r="1.500" fill="none" stroke="#222"/><circle cx="15" cy="7" r="1.500" fill="none" stroke="#222"/><path d="M6 15l8-7" stroke="#222"/>'],
  ['Rayo 1', handle('#5cf05c')], ['Rayo 2', handle('#2cb02c')], ['Rayo 3', handle('#107810')], ['Rayo 4', handle('#f01010')],
  ['Regla', '<path d="M2 15L14 4l4 4L6 19z" fill="#b8c0c4" stroke="#666"/><path d="M5 13l2 2M8 10l2 2M11 8l2 2" stroke="#555"/>'],
  ['Patrón', '<path d="M2 5h16v6H2z" fill="#80c89a" fill-opacity=".6"/><path d="M2 11h16v6H2z" fill="#d09090" fill-opacity=".5"/><path d="M2 15l4-6 3 5 4-7 2 5 3-3" fill="none" stroke="#6a90e0"/>'],
  ['Elipse roja', oval('#f01828')], ['Elipse marrón', oval('#8a5418')], ['Elipse verde', oval('#0a8a30')], ['Elipse lima', oval('#10e830')],
  ['Línea', slash('#222', 1)], ['Línea verde', slash('#2cb02c', 2)], ['Línea roja', slash('#f01010', 2)],
  ['H1', bar('#111', 1)], ['H2', bar('#f08c80')], ['H3', bar('#10e820')], ['H4', bar('#107810')], ['H5', bar('#f01010')], ['H6', bar('#5c94f0')], ['H7', bar('#0808a0')],
  ['Vertical', '<path d="M10 2v18" stroke="#111"/>'],
  ['Ángulo', '<path d="M16 5L2 16h16" fill="none" stroke="#c85050"/><path d="M8 10l4 5" stroke="#1030e0" stroke-width="2"/><text x="14" y="11" class="ts">α</text>'],
  ['Círculo', '<circle cx="9" cy="11" r="6" fill="none" stroke="#f08040"/>' + plus(9, 11) + plus(15, 5)],
  ['Ondas', '<text x="1" y="11" class="ts">1</text><text x="6" y="9" class="ts">3+</text><text x="12" y="7" class="ts">5+</text><path d="M3 17L9 9l1 6 5-9" fill="none" stroke="#3060f0"/><text x="5" y="20" class="ts">2</text><text x="12" y="18" class="ts">4</text>'],
  ['Corrección', '<path d="M4 15l6-9 5 9" fill="none" stroke="#3060f0"/><text x="1" y="18" class="ts">a</text><text x="10" y="8" class="ts">+b</text><text x="11" y="19" class="ts">c+</text>'],
  ['Validar', '<path d="M3 11l3-2 3 3 6-7 3 2-9 11z" fill="#28c038" stroke="#108820"/>'],
  ['Me gusta', '<path d="M3 10h4v8H3zM7 10l4-6c3 0 2 3 1 5h5v4l-2 5H7z" fill="#28c038" stroke="#108820"/>'],
  ['Borrar', '<path d="M4 5l3-1 3 4 3-4 4 2-4 5 4 4-3 3-4-4-4 4-3-3 4-4z" fill="#f00c0c" stroke="#a80808"/>'],
  ['Aviso', '<path d="M10 2l7 14H3z" fill="#f0a820"/>'],
];
document.getElementById('tools').innerHTML = toolIcons.map(([n, s], k) => `<button class="tool${k ? '' : ' on'}" aria-label="${n}"><svg width="20" height="22" viewBox="0 0 20 22">${s}</svg></button>`).join('');

function drawAll() { drawPrice(); drawTrains(); drawWilly(); drawAwesome(); drawForce(); drawTime(); }
drawAll();
addEventListener('resize', drawAll);
```
